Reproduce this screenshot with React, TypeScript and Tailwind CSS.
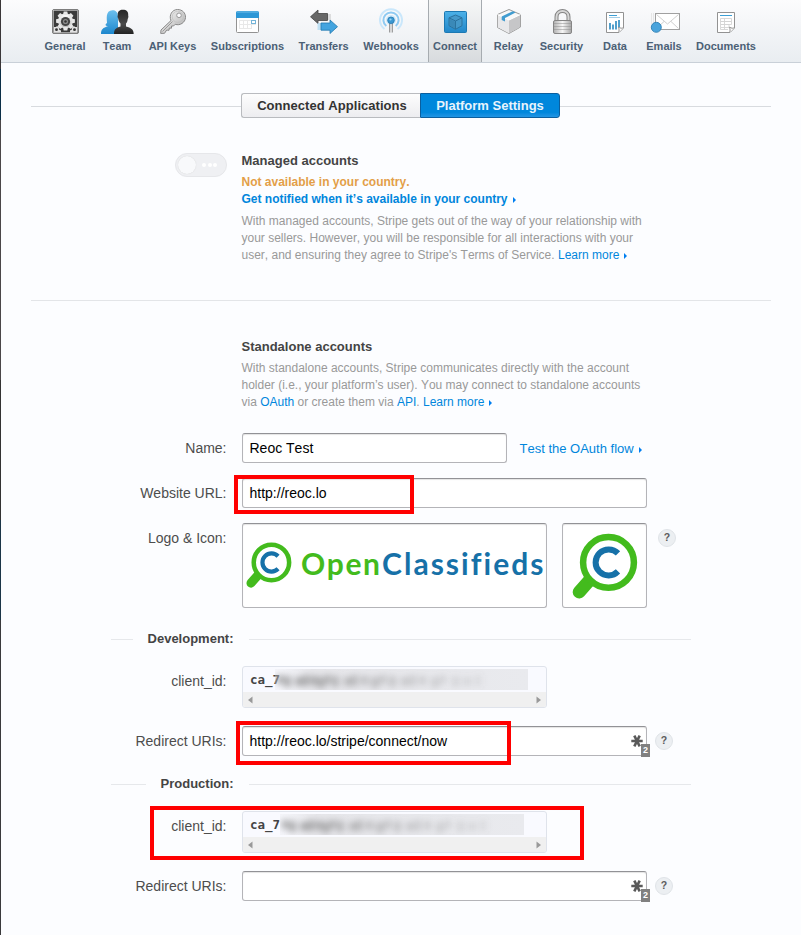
import React from "react";

const TAB = "flex h-full shrink-0 flex-col items-center pt-[7px]";

function GeneralIcon() {
  return (
    <svg width="28" height="28" viewBox="0 0 28 28">
      <defs>
        <linearGradient id="gearG" x1="0" y1="0" x2="0" y2="1">
          <stop offset="0" stopColor="#fff" />
          <stop offset="1" stopColor="#b9b9b9" />
        </linearGradient>
      </defs>
      <rect x="1.5" y="2.5" width="26" height="24" rx="1.5" fill="#3b3b3b" stroke="#7d7d7d" />
      <rect x="2.5" y="3.5" width="24" height="22" fill="none" stroke="#c9c9c9" strokeWidth="0.7" />
      <g transform="translate(14.5 14)" fill="url(#gearG)">
        <circle r="7.4" />
        {[0, 45, 90, 135, 180, 225, 270, 315].map((a) => (
          <path key={a} d="M-2.5 -6 L-1.8 -9.4 H1.8 L2.5 -6 Z" transform={`rotate(${a})`} fill="#e6e6e6" />
        ))}
      </g>
      <circle cx="14.5" cy="14.5" r="4.6" fill="#444" />
      <circle cx="14.5" cy="14.5" r="2.6" fill="#8a8a8a" />
      <circle cx="14.5" cy="14.5" r="1.2" fill="#333" />
      <g fill="#e2e2e2">
        <path d="M3 20 h2 l1-1 2 1.5 v2 l2 1 v2 H3 Z" />
        <path d="M26 20 h-2 l-1-1 -2 1.5 v2 l-2 1 v2 H26 Z" />
      </g>
      <circle cx="5.5" cy="22.7" r="1.4" fill="#333" />
      <circle cx="23.5" cy="22.7" r="1.4" fill="#333" />
    </svg>
  );
}

function TeamIcon() {
  return (
    <svg width="34" height="28" viewBox="0 0 34 28">
      <defs>
        <linearGradient id="teamB" x1="0" y1="0" x2="0" y2="1">
          <stop offset="0" stopColor="#6cc0ee" />
          <stop offset="1" stopColor="#1d87cd" />
        </linearGradient>
        <linearGradient id="teamD" x1="0" y1="0" x2="0" y2="1">
          <stop offset="0" stopColor="#262626" />
          <stop offset="0.6" stopColor="#4a4a4a" />
          <stop offset="1" stopColor="#222" />
        </linearGradient>
      </defs>
      <path d="M1 27 C1 22 3 21 8 19 C5 19 5 17.5 7 16 C7 12 5 3.5 12.5 3.2 C15 3 18 5 18 9 V27 Z" fill="url(#teamB)" />
      <path d="M14 27 C14 22 16 21 20.5 19.5 V16.5 C18.8 15 18.4 13 18.2 11.5 C17.3 10 17.5 9 17.8 8 C17.5 4 20 3 22.5 2.8 C26.5 2.7 28.6 4.5 28.2 8.5 C28.6 9.5 28.3 11 27.7 12 C27.5 14 27 15.5 26 16.5 V19.5 C31 21 33.6 22 33.7 27 Z" fill="url(#teamD)" />
    </svg>
  );
}

function KeyIcon() {
  return (
    <svg width="28" height="28" viewBox="0 0 28 28">
      <defs>
        <linearGradient id="keyG" x1="0" y1="0" x2="1" y2="1">
          <stop offset="0" stopColor="#fff" />
          <stop offset="1" stopColor="#aaa" />
        </linearGradient>
      </defs>
      <path d="M12 13.5 C9.7 8.5 13 2.5 18.5 2.5 C23.3 2.5 26.7 6 26.5 10.5 C26.2 15.5 21 19 16.2 17.3 L14.5 19 L12.5 19 L12.5 21.2 L10.3 21 L10 23.3 L7.7 23 L5.5 26.3 L1.7 26.4 L2 23 Z" fill="url(#keyG)" stroke="#888" strokeWidth="1" />
      <path d="M3.5 24.5 L13.5 14.5" stroke="#999" strokeWidth="1" />
      <circle cx="20" cy="8.3" r="2.3" fill="#fdfdff" stroke="#999" strokeWidth="1" />
      <circle cx="18.8" cy="9.8" r="5.6" fill="none" stroke="#bbb" strokeWidth="0.6" />
    </svg>
  );
}

function CalendarIcon() {
  return (
    <svg width="28" height="28" viewBox="0 0 28 28">
      <rect x="2.5" y="5.5" width="22" height="20" rx="1" fill="#fff" stroke="#929292" />
      <path d="M2 11 V5.5 Q2 4 3.5 4 H23.5 Q25 4 25 5.5 V11 Z" fill="#2d97d6" />
      <path d="M3 5 H24" stroke="#74bfe9" />
      <path d="M5 13.5 H22 M5 17.5 H22 M5 21.5 H18 M5.5 13 V22 M9.5 13 V22 M13.5 13 V22 M17.5 13 V22" stroke="#e8e8e8" fill="none" />
      <rect x="17.5" y="13.5" width="4" height="3" fill="#fff" stroke="#74b4d8" />
    </svg>
  );
}

function TransfersIcon() {
  return (
    <svg width="30" height="28" viewBox="0 0 30 28">
      <path d="M18 7 H22 V13 H18 Z" fill="#ccc" opacity=".6" />
      <path d="M1.5 9.8 L9 3 V6.5 H18.5 V13.5 H9 V16.5 Z" fill="#676767" stroke="#444" strokeWidth="0.8" />
      <path d="M8.5 16 H13 V23 H8.5 Z" fill="#9ed3f1" opacity=".6" />
      <path d="M28.5 19.7 L21 13 V16 H12 V23.2 H21 V26.5 Z" fill="#43a4df" stroke="#2278ae" strokeWidth="0.8" />
    </svg>
  );
}

function WebhooksIcon() {
  return (
    <svg width="28" height="28" viewBox="0 0 28 28">
      <g fill="none">
        <path d="M7.5 22 A11 11 0 1 1 20.5 22" stroke="#cae7fb" strokeWidth="2" />
        <path d="M9.3 19 A7.6 7.6 0 1 1 18.7 19" stroke="#8fcaf2" strokeWidth="2" />
        <circle cx="14" cy="13" r="5" fill="#cde8fa" />
      </g>
      <path d="M12.8 15 V25.5 M15.2 15 V25.5" stroke="#777" strokeWidth="1" />
      <path d="M14 15 V25" stroke="#ddd" strokeWidth="1.2" />
      <circle cx="14" cy="13.3" r="3.3" fill="#3b98d2" stroke="#2578b0" strokeWidth="0.8" />
      <circle cx="13.5" cy="12.5" r="1.1" fill="#9ad2f2" />
    </svg>
  );
}

function ConnectIcon() {
  return (
    <svg width="28" height="28" viewBox="0 0 28 28">
      <defs>
        <linearGradient id="conG" x1="0" y1="0" x2="0" y2="1">
          <stop offset="0" stopColor="#4cb1e8" />
          <stop offset="1" stopColor="#2287c8" />
        </linearGradient>
      </defs>
      <rect x="3.5" y="4.5" width="22" height="21" rx="1" fill="url(#conG)" stroke="#1d79b3" />
      <path d="M14.5 8 L21 10.8 V18.7 L14.5 22.3 L8 18.7 V10.8 Z" fill="#4599ca" stroke="#2a729f" strokeWidth="1" />
      <path d="M8 10.8 L14.5 14 L21 10.8 M14.5 14 V22" fill="none" stroke="#2a729f" strokeWidth="1" />
      <path d="M8.3 11.5 L14.2 14.8 V21.8 L8.3 18.3 Z" fill="#347fab" opacity=".6" />
    </svg>
  );
}

function RelayIcon() {
  return (
    <svg width="28" height="28" viewBox="0 0 28 28">
      <path d="M14 2.5 L25.5 7.5 V20 L14 26.5 L2.5 20.5 V7.5 Z" fill="#f8f8f8" stroke="#999" />
      <path d="M14 13 L25.2 7.8 V20 L14 26.2 Z" fill="#c6c6c8" />
      <path d="M2.8 7.8 L14 13 V26.2 L2.8 20.3 Z" fill="#e8e8ea" />
      <path d="M2.5 7.5 L14 13 L25.5 7.5" fill="none" stroke="#fff" />
      <path d="M6.7 9.6 L17.6 4.2 L20.6 5.5 L10 11 V14.6 L6.7 13 Z" fill="#419cd0" />
    </svg>
  );
}

function LockIcon() {
  return (
    <svg width="28" height="28" viewBox="0 0 28 28">
      <defs>
        <linearGradient id="lockG" x1="0" y1="0" x2="1" y2="0">
          <stop offset="0" stopColor="#b0b0b0" />
          <stop offset="0.5" stopColor="#f6f6f6" />
          <stop offset="1" stopColor="#a6a6a6" />
        </linearGradient>
      </defs>
      <path d="M8.5 14 V10 C8.5 2 20.5 2 20.5 10 V14" fill="none" stroke="#858585" strokeWidth="4" />
      <path d="M8.5 14 V10 C8.5 2 20.5 2 20.5 10 V14" fill="none" stroke="#d6d6d6" strokeWidth="2" />
      <rect x="5.5" y="13.5" width="18" height="13" rx="1.5" fill="url(#lockG)" stroke="#858585" />
      <path d="M6 16.5 H23 M6 19.5 H23 M6 22.5 H23" stroke="#8c8c8c" strokeWidth="0.5" />
    </svg>
  );
}

function DataIcon() {
  return (
    <svg width="28" height="28" viewBox="0 0 28 28">
      <path d="M5.5 5.5 H22.5 V21 L18 25.5 H5.5 Z" fill="#fff" stroke="#929292" />
      <path d="M17.5 25.5 C18.5 23.5 18 22.5 17.5 20 C19.5 21.5 21 21.5 22.5 20.5" fill="#fff" stroke="#929292" />
      <path d="M8 8.5 H16" stroke="#3d9fd5" />
      <path d="M8 10.5 H19" stroke="#a5cfe6" />
      <path d="M9 22.5 V16 M12 22.5 V17.5 M15 22.5 V14 M18 20 V13" stroke="#3f96c7" strokeWidth="1.8" />
    </svg>
  );
}

function EmailIcon() {
  return (
    <svg width="32" height="28" viewBox="0 0 32 28">
      <path d="M3.5 6 V17 M5.5 6 V17" stroke="#e6e6e6" />
      <rect x="7.5" y="6.5" width="24" height="16" fill="#fff" stroke="#a0a0a0" />
      <path d="M8.5 7.5 L19.5 17 L30.5 7.5 M8.5 21.5 L16 14.5 M30.5 21.5 L23 14.5" fill="none" stroke="#cfcfcf" />
      <circle cx="8.3" cy="20.3" r="5" fill="#4aa4dc" stroke="#2c7fb3" strokeWidth="0.9" />
    </svg>
  );
}

function DocumentIcon() {
  return (
    <svg width="28" height="28" viewBox="0 0 28 28">
      <path d="M5.5 5.5 H22.5 V21 L18 25.5 H5.5 Z" fill="#fff" stroke="#929292" />
      <path d="M17.5 25.5 C18.5 23.5 18 22.5 17.5 20 C19.5 21.5 21 21.5 22.5 20.5" fill="#fff" stroke="#929292" />
      <path d="M8 8.5 H20" stroke="#3d9fd5" />
      <path d="M8.5 11.5 H19.5 V14.5 H8.5 Z M8.5 14.5 H19.5 V17.5 H8.5 Z M8.5 17.5 H17 V20.5 H8.5 Z M8.5 20.5 V22.5 H16 M12.5 11.5 V22.5" fill="none" stroke="#d4d4d4" strokeWidth="0.9" />
    </svg>
  );
}

const navItems = [
  { label: "General", width: "w-[58px]", icon: <GeneralIcon /> },
  { label: "Team", width: "w-[46px]", icon: <TeamIcon /> },
  { label: "API Keys", width: "w-[65px]", icon: <KeyIcon /> },
  { label: "Subscriptions", width: "w-[85px]", icon: <CalendarIcon /> },
  { label: "Transfers", width: "w-[67px]", icon: <TransfersIcon /> },
  { label: "Webhooks", width: "w-[68px]", icon: <WebhooksIcon /> },
  { label: "Connect", width: "w-[54px]", icon: <ConnectIcon />, active: true },
  { label: "Relay", width: "w-[53px]", icon: <RelayIcon /> },
  { label: "Security", width: "w-[53px]", icon: <LockIcon /> },
  { label: "Data", width: "w-[54px]", icon: <DataIcon /> },
  { label: "Emails", width: "w-[44px]", icon: <EmailIcon /> },
  { label: "Documents", width: "w-[80px]", icon: <DocumentIcon /> },
];

function NavBar() {
  return (
    <nav className="flex h-[63px] border-b border-[#c9d0d8] bg-linear-to-b from-[#fcfcfd] to-[#e9edf1] pl-[35px]">
      {navItems.map((item) => (
        <a
          key={item.label}
          className={`${TAB} ${item.width} ${
            item.active
              ? "ml-[3px] h-[63px] border-x border-[#a6abb0] bg-linear-to-b from-[#f6f7f7] to-[#d8dbde]"
              : ""
          }`}
        >
          <span className="flex h-7 items-center justify-center">{item.icon}</span>
          <span className="mt-[3px] text-[11px] leading-4 font-bold whitespace-nowrap text-[#4b6075]">{item.label}</span>
        </a>
      ))}
    </nav>
  );
}

function Arrow() {
  return (
    <svg width="3" height="6" viewBox="0 0 3 6" className="ml-[5px] inline-block align-[0px]">
      <path d="M0 0 L3 3 L0 6 Z" fill="#007ff0" />
    </svg>
  );
}

function Link({ children }: { children: React.ReactNode }) {
  return <a className="text-[#0086dc]">{children}</a>;
}

function Row({ label, gap, children }: { label: string; gap: string; children: React.ReactNode }) {
  return (
    <div className={`flex items-start ${gap}`}>
      <label className="w-[225.5px] shrink-0 pt-1.5 text-right text-sm leading-[18px] text-[#4d4d4d]">{label}</label>
      <div className="ml-[15.5px] flex items-start">{children}</div>
    </div>
  );
}

const FIELD = "rounded-[3px] border border-[#b4b4b8] border-t-[#929296] bg-white shadow-[inset_0_1px_1px_#e4e4e4]";

function Help({ gap }: { gap: string }) {
  return (
    <span className={`flex size-[18px] items-center justify-center rounded-full border border-[#e0e4e8] bg-[#eceff2] pb-px text-[10.5px] leading-none font-bold text-[#5c5c5c] ${gap}`}>
      ?
    </span>
  );
}

function Magnifier({ size }: { size: number }) {
  return (
    <svg width={size} height={size} viewBox="0 0 66 66" className="shrink-0">
      <path d="M7.2 59 L18 46.8" stroke="#43bb1d" strokeWidth="13" strokeLinecap="round" />
      <circle cx="36.5" cy="29.4" r="25.4" fill="#fff" stroke="#43bb1d" strokeWidth="6.5" />
      <path d="M46 20.4 A13 13 0 1 0 46 38.4" fill="none" stroke="#1671a8" strokeWidth="6" />
    </svg>
  );
}

function Divider({ label, left, gap }: { label: string; left: string; gap: string }) {
  return (
    <div className={`ml-[110px] flex h-[17px] w-[580px] items-center text-[13px] leading-[17px] font-bold text-[#444] ${gap}`}>
      <div className={`mt-px h-px bg-[#e6e8eb] ${left}`} />
      <span className="ml-auto">{label}</span>
      <div className="mt-px ml-[15.5px] h-px w-[442px] shrink-0 bg-[#e6e8eb]" />
    </div>
  );
}

const smudges = [2, 9, 20, 28, 35, 42, 50, 57, 69, 77, 86, 96, 105, 114, 126, 135, 144, 156, 165, 177, 188, 200];

function ClientId({ text, start, id, width }: { text: string; start: number; id: string; width: number }) {
  return (
    <div className="flex h-[42px] w-[305px] flex-col overflow-hidden rounded-[3px] border border-[#dfe3eb] bg-[#f9faff]">
      <div className="relative h-[25px] pl-[7px] font-['DejaVu_Sans_Mono',monospace] text-[12.5px] leading-[25px] font-bold text-[#444]">
        {text}
        <svg className="absolute top-[2px]" style={{ left: start }} width={width} height="21">
          <defs>
            <filter id={id} x="-10%" y="-80%" width="120%" height="260%">
              <feGaussianBlur stdDeviation="3 3" />
            </filter>
            <linearGradient id={`${id}bg`} x1="0" x2="1">
              <stop offset="0" stopColor="#ececf0" stopOpacity="0.3" />
              <stop offset="0.15" stopColor="#e6e6ea" />
              <stop offset="1" stopColor="#e9eaee" />
            </linearGradient>
          </defs>
          <rect width={width} height="21" fill={`url(#${id}bg)`} />
          <g filter={`url(#${id})`}>
            {smudges.map((x, i) => (
              <rect key={x} x={x} y={6 + (i % 3)} width={6 + (i % 3)} height={9 + (i % 2) * 2} fill="#777" opacity={0.6 - i * 0.022} />
            ))}
          </g>
        </svg>
      </div>
      <div className="flex h-[15px] items-center justify-between bg-[#f0f0f0] px-[5px]">
        <svg width="5" height="8"><path d="M4.5 0.5 V7.5 L0 4 Z" fill="#999" /></svg>
        <svg width="5" height="8"><path d="M0.5 0.5 V7.5 L5 4 Z" fill="#999" /></svg>
      </div>
    </div>
  );
}

function UriField({ value }: { value: string }) {
  return (
    <>
      <div className={`${FIELD} relative h-[30px] w-[405px] pl-[6.5px] text-sm leading-7 text-black`}>
        {value}
        <svg className="absolute top-[8px] right-[3px]" width="12" height="12" viewBox="0 0 12 12">
          <path d="M0.3 6 H11.7 M3.3 0.7 L8.7 11.3 M8.7 0.7 L3.3 11.3" stroke="#5a5a5a" strokeWidth="2.6" />
        </svg>
        <span className="absolute right-[-4px] bottom-[-2px] flex h-[13px] w-[9px] items-center justify-center bg-[#808080] text-[9px] leading-none font-bold text-white">2</span>
      </div>
      <Help gap="ml-2 mt-1.5" />
    </>
  );
}

export default function App() {
  return (
    <div className="relative flex h-[935px] w-[801px] overflow-hidden bg-[#fcfdff] font-['Liberation_Sans',Arial,sans-serif] [font-kerning:none]">
      <div className="w-px shrink-0 bg-[linear-gradient(#3a3638_0_69px,#0b2f47_69px_120px,#4a4749_120px_380px,#333_380px_520px,#1b3547_520px_620px,#3a3a3c_620px)]" />
      <div className="w-[800px]">
        <NavBar />
        <main>
          <div className="mt-[30px] ml-[30px] flex w-[740px] items-center text-[13px] font-bold">
            <div className="mt-[2px] h-px w-[210px] bg-[#d8dbdf]" />
            <button className="h-[25px] w-[179px] rounded-l-[3px] border border-r-0 border-[#b9bbbf] bg-linear-to-b from-[#fdfdfd] to-[#ededf0] pl-[2px] tracking-[0.04px] text-[#333]">Connected Applications</button>
            <button className="h-[25px] w-[140px] rounded-r-[3px] border border-[#0b5f9f] bg-linear-to-b from-[#0087dc] from-80% to-[#2095e4] text-[#e8f4fc]">Platform Settings</button>
            <div className="mt-[2px] h-px flex-1 bg-[#d8dbdf]" />
          </div>

          <section className="mt-[34px] flex pl-[174px]">
            <div className="mt-px flex h-6 w-[52px] shrink-0 items-center rounded-full border border-[#e6e7ea] bg-[#eff0f3] pl-[2px]">
              <span className="size-[18px] rounded-full bg-[#f8f9fb] shadow-[0_0_1px_#ccc]" />
              <span className="ml-[6px] flex gap-[1.5px]">
                <i className="size-1 rounded-full bg-white" />
                <i className="size-1 rounded-full bg-white" />
                <i className="size-1 rounded-full bg-white" />
              </span>
            </div>
            <div className="ml-[14.5px] text-xs leading-[17px] whitespace-nowrap">
              <h2 className="text-[13px] font-bold text-[#444]">Managed accounts</h2>
              <p className="mt-[5px] font-bold text-[#e39f48]">Not available in your country.</p>
              <p className="font-bold"><Link>Get notified when it’s available in your country<Arrow /></Link></p>
              <p className="mt-[5px] text-[#999]">
                With managed accounts, Stripe gets out of the way of your relationship with<br />
                your sellers. However, you will be responsible for all interactions with your<br />
                user, and ensuring they agree to Stripe's Terms of Service. <Link>Learn more<Arrow /></Link>
              </p>
            </div>
          </section>

          <hr className="mt-[36px] ml-[30px] w-[740px] border-[#e3e5e8]" />

          <section className="mt-[37px] ml-[240.5px] text-xs leading-[17px] whitespace-nowrap">
            <h2 className="text-[13px] font-bold text-[#444]">Standalone accounts</h2>
            <p className="mt-[5px] text-[#999]">
              With standalone accounts, Stripe communicates directly with the account<br />
              holder (i.e., your platform’s user). You may connect to standalone accounts<br />
              via <Link>OAuth</Link> or create them via <Link>API</Link>. <Link>Learn more<Arrow /></Link>
            </p>
          </section>

          <Row label="Name:" gap="mt-[22px]">
            <div className={`${FIELD} h-[30px] w-[265px] pl-[6.5px] text-sm leading-7 text-black`}>Reoc Test</div>
            <span className="ml-[12.5px] pt-px text-[13px] leading-[29px]"><Link>Test the OAuth flow<Arrow /></Link></span>
          </Row>
          <Row label="Website URL:" gap="mt-[15px]">
            <div className={`${FIELD} h-[30px] w-[405px] pl-[6.5px] text-sm leading-7 text-black`}>http://reoc.lo</div>
          </Row>
          <Row label="Logo & Icon:" gap="mt-[15px]">
            <div className={`${FIELD} flex h-[85px] w-[305px] items-center pb-[2px] pl-[3px]`}>
              <Magnifier size={46} />
              <svg width="246" height="44" viewBox="0 0 246 44" className="ml-[8.5px] shrink-0 font-['Lato',sans-serif] text-[30px] font-bold [font-variant-ligatures:none]">
                <text x="0" y="31.5" textLength="79" fill="#43bb1d">Open</text>
                <text x="81" y="31.5" textLength="161.5" fill="#1671a8">Classifieds</text>
              </svg>
            </div>
            <div className={`${FIELD} ml-[15px] flex h-[85px] w-[85px] items-center justify-center`}>
              <Magnifier size={66} />
            </div>
            <Help gap="ml-[11px] mt-1.5" />
          </Row>

          <Divider label="Development:" left="w-[22px]" gap="mt-[22px]" />
          <Row label="client_id:" gap="mt-[19px]">
            <ClientId text="ca_7" start={32} id="devBlur" width={253} />
          </Row>
          <Row label="Redirect URIs:" gap="mt-[18px]">
            <UriField value="http://reoc.lo/stripe/connect/now" />
          </Row>

          <Divider label="Production:" left="w-[35px]" gap="mt-[19px]" />
          <Row label="client_id:" gap="mt-[19px]">
            <ClientId text="ca_7" start={37} id="prodBlur" width={244} />
          </Row>
          <Row label="Redirect URIs:" gap="mt-[18px]">
            <UriField value="" />
          </Row>
        </main>
      </div>

      <div className="absolute top-[475px] left-[234px] h-[39px] w-[180px] border-4 border-[#ff0000]" />
      <div className="absolute top-[721px] left-[236px] h-[44px] w-[275px] border-4 border-[#ff0000]" />
      <div className="absolute top-[806px] left-[150px] h-[54px] w-[434px] border-4 border-[#ff0000]" />
    </div>
  );
}
